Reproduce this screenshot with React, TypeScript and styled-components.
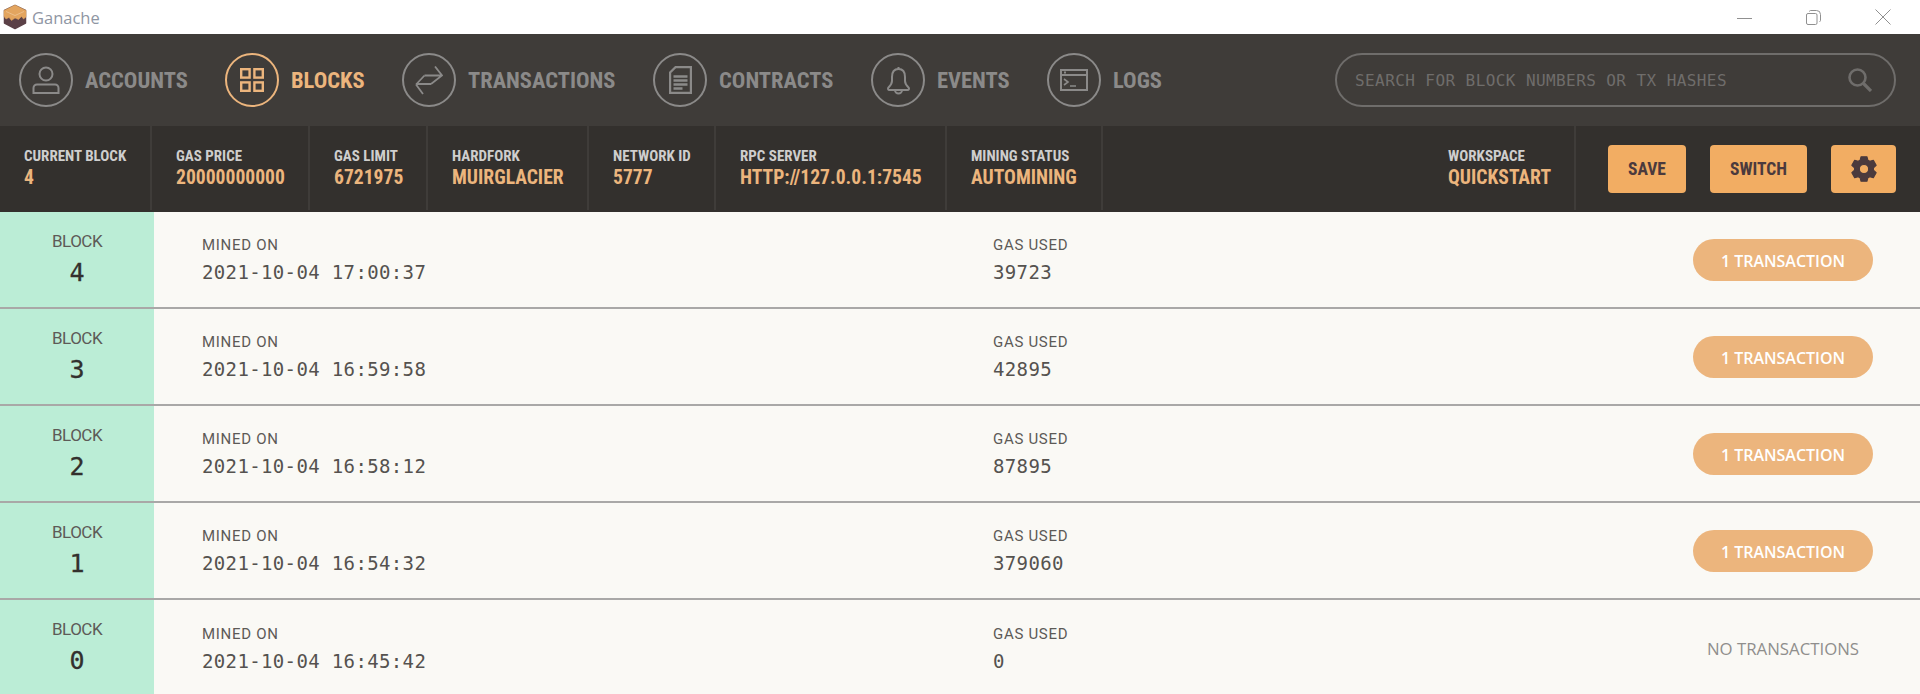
import * as React from 'react';
import styled, { createGlobalStyle } from 'styled-components';

const GlobalStyle = createGlobalStyle`
  html, body {
    margin: 0;
    padding: 0;
    height: 100%;
    overflow: hidden;
    background: #faf9f5;
  }
`;

const condensed = `"Roboto Condensed", Roboto, sans-serif`;
const mono = `"DejaVu Sans Mono", "Liberation Mono", monospace`;

const Page = styled.div`
  width: 1920px;
  height: 694px;
  overflow: hidden;
  display: flex;
  flex-direction: column;
`;

const TitleBar = styled.div`
  height: 34px;
  flex: none;
  background: #fff;
  display: flex;
  align-items: center;
  padding-left: 3px;
`;

const AppName = styled.span`
  margin-left: 5px;
  font: 400 16.5px "Open Sans", sans-serif;
  color: #8f96a3;
`;

const WindowButtons = styled.div`
  margin-left: auto;
  display: flex;
  align-items: center;
  gap: 54px;
  padding-right: 29px;
  color: #909090;
`;

const Nav = styled.div`
  height: 92px;
  flex: none;
  background: #3f3c39;
  display: flex;
  align-items: center;
  padding: 0 24px 0 19px;
`;

const NavItem = styled.div<{ $active?: boolean }>`
  display: flex;
  align-items: center;
  margin-right: 38px;
  color: ${p => (p.$active ? '#ecb57d' : '#8b8a89')};
`;

const NavCircle = styled.div`
  width: 54px;
  height: 54px;
  box-sizing: border-box;
  border: 2px solid currentColor;
  border-radius: 50%;
  display: flex;
  align-items: center;
  justify-content: center;
  margin-right: 12px;
`;

const Squeezed = styled.span<{ $w: number }>`
  display: inline-block;
  width: ${p => p.$w}px;
  white-space: nowrap;
`;

const NavLabel = styled(Squeezed)`
  font: 700 22.5px ${condensed};
  font-stretch: condensed;
`;

const Search = styled.div`
  margin-left: auto;
  width: 561px;
  height: 54px;
  box-sizing: border-box;
  border: 2px solid #6f6d6b;
  border-radius: 27px;
  display: flex;
  align-items: center;
  justify-content: space-between;
  padding: 0 22px 0 18px;
  color: #6f6d6b;
`;

const SearchText = styled.span`
  font: 400 16px ${mono};
  letter-spacing: 0.42px;
`;

const Stats = styled.div`
  height: 86px;
  flex: none;
  box-sizing: border-box;
  background: #33302d;
  display: flex;
  padding-bottom: 2px;
`;

const Stat = styled.div`
  padding: 0 24px 1px;
  border-right: 2px solid #3f3c39;
  display: flex;
  flex-direction: column;
  justify-content: center;
`;

const WorkspaceStat = styled(Stat)`
  margin-left: auto;
`;

const StatLabel = styled(Squeezed)`
  font: 700 15px ${condensed};
  font-stretch: condensed;
  color: #cfcecd;
  line-height: 20px;
`;

const StatValue = styled(Squeezed)`
  font: 700 19.6px ${condensed};
  font-stretch: condensed;
  color: #ecb57d;
  line-height: 24px;
`;

const Actions = styled.div`
  display: flex;
  align-items: center;
  gap: 24px;
  padding: 2px 24px 0 32px;
`;

const ActionButton = styled.button<{ $w: number }>`
  width: ${p => p.$w}px;
  height: 48px;
  border: 0;
  border-radius: 4px;
  padding: 0;
  background: #f2ad63;
  color: #4b3a3d;
  font: 700 17.5px ${condensed};
  font-stretch: condensed;
  display: flex;
  align-items: center;
  justify-content: center;
`;

const Row = styled.div`
  height: 97px;
  flex: none;
  box-sizing: border-box;
  display: flex;
  background: #faf9f5;
  border-bottom: 2px solid #a9a8a7;
  &:last-child {
    border-bottom: 0;
  }
`;

const BlockCell = styled.div`
  width: 154px;
  flex: none;
  background: #bbedd6;
  display: flex;
  flex-direction: column;
  align-items: center;
  padding-top: 17px;
  box-sizing: border-box;
`;

const BlockLabel = styled.div`
  font: 400 17px Roboto, sans-serif;
  letter-spacing: -0.5px;
  color: #5d5a57;
  line-height: 24px;
`;

const BlockNumber = styled.div`
  font: 400 25px ${mono};
  -webkit-text-stroke: 0.3px #33302d;
  color: #33302d;
  line-height: 36px;
  margin-top: 2px;
`;

const RowBody = styled.div`
  flex: 1;
  display: grid;
  grid-template-columns: 791px 1fr auto;
  padding: 0 47px 0 48px;
  align-items: center;
`;

const Field = styled.div`
  display: flex;
  flex-direction: column;
  padding-top: 2px;
`;

const FieldLabel = styled.div`
  font: 400 15px Roboto, sans-serif;
  letter-spacing: 0.7px;
  color: #5d5a57;
  line-height: 20px;
`;

const FieldValue = styled.div`
  font: 400 19px ${mono};
  letter-spacing: 0.36px;
  color: #55524f;
  line-height: 30px;
  margin-top: 2px;
`;

const TxPill = styled.div`
  width: 180px;
  height: 42px;
  box-sizing: border-box;
  padding-top: 2px;
  border-radius: 21px;
  background: #ecb57d;
  color: #fff;
  font: 600 16px "Open Sans", sans-serif;
  display: flex;
  align-items: center;
  justify-content: center;
`;

const NoTx = styled.div`
  width: 180px;
  text-align: center;
  color: #8f8e8c;
  font: 400 16.8px "Open Sans", sans-serif;
`;

const Logo = () => (
  <svg width="24" height="26" viewBox="0 0 24 26">
    <path d="M12 1.500 L22.500 6.500 V19 L12 24.500 L1.500 19 V6.500 Z" fill="#5b4147" stroke="#5b4147" strokeLinejoin="round" strokeWidth="1.500" />
    <path d="M12 1 L23 6.500 V13 L20.500 15 L18.500 12.500 L15.500 15.500 L12 14 L8.500 16.500 L6 13.500 L3 15 L1 12.500 V6.500 Z" fill="#e3a55f" stroke="#e3a55f" strokeLinejoin="round" strokeWidth="0.500" />
    <path d="M3 7.500 L12 11.500 L21 7.500" fill="none" stroke="#efc595" strokeWidth="0.800" />
  </svg>
);

const icons: Record<string, React.ReactNode> = {
  accounts: (
    <svg width="28" height="28" viewBox="0 0 28 28" fill="none" stroke="currentColor" strokeWidth="2">
      <circle cx="14" cy="8" r="6.500" />
      <path d="M5 18.500h18a3.500 3.500 0 0 1 3.500 3.500v5H1.500v-5A3.500 3.500 0 0 1 5 18.500z" />
    </svg>
  ),
  blocks: (
    <svg width="24" height="24" viewBox="0 0 24 24" fill="none" stroke="currentColor" strokeWidth="2.400">
      <rect x="1.200" y="1.200" width="8.400" height="8.400" />
      <rect x="14.400" y="1.200" width="8.400" height="8.400" />
      <rect x="1.200" y="14.400" width="8.400" height="8.400" />
      <rect x="14.400" y="14.400" width="8.400" height="8.400" />
    </svg>
  ),
  transactions: (
    <svg width="28" height="29" viewBox="0 0 28 29" fill="none" stroke="currentColor" strokeWidth="1.800">
      <path d="M9.500 9.500H27M20 0.500L27 9.500L16 18" />
      <path d="M16 18H1M1 18.500L8 28M1 18.500L9.500 9.500" />
    </svg>
  ),
  contracts: (
    <svg width="23" height="28" viewBox="0 0 23 28" fill="none" stroke="currentColor" strokeWidth="2.200">
      <path d="M6.500 1.100h15.400v25.800H1.100V6.500z" />
      <path d="M4.500 10.500h14M4.500 14.500h14M4.500 18.500h14M4.500 22.500h9" strokeWidth="2.400" />
    </svg>
  ),
  events: (
    <svg width="25" height="29" viewBox="0 0 25 29" fill="none" stroke="currentColor" strokeWidth="2">
      <path d="M12.500 3c4.500 0 6.500 3.500 6.500 8v4c0 3 1.500 4.500 3.500 6.500 1 1 .5 2.500-1 2.500H3.500c-1.500 0-2-1.500-1-2.500C4.500 19.500 6 18 6 15v-4c0-4.500 2-8 6.500-8z" />
      <path d="M12.500 1v2M9 24a3.500 3.500 0 0 0 7 0" />
    </svg>
  ),
  logs: (
    <svg width="28" height="22" viewBox="0 0 28 22" fill="none" stroke="currentColor" strokeWidth="2">
      <rect x="1" y="1" width="26" height="20" />
      <path d="M1 6h26M4 3.500h2" />
      <path d="M4 10l4 3-4 3M10 17h6" strokeWidth="1.600" />
    </svg>
  ),
};

const navItems = [
  { id: 'accounts', label: 'ACCOUNTS', w: 102 },
  { id: 'blocks', label: 'BLOCKS', w: 73, active: true },
  { id: 'transactions', label: 'TRANSACTIONS', w: 147 },
  { id: 'contracts', label: 'CONTRACTS', w: 114 },
  { id: 'events', label: 'EVENTS', w: 72 },
  { id: 'logs', label: 'LOGS', w: 48 },
];

const stats = [
  { label: 'CURRENT BLOCK', value: '4', w: 102 },
  { label: 'GAS PRICE', value: '20000000000', w: 108 },
  { label: 'GAS LIMIT', value: '6721975', w: 68 },
  { label: 'HARDFORK', value: 'MUIRGLACIER', w: 111 },
  { label: 'NETWORK ID', value: '5777', w: 77 },
  { label: 'RPC SERVER', value: 'HTTP://127.0.0.1:7545', w: 181 },
  { label: 'MINING STATUS', value: 'AUTOMINING', w: 106 },
];

const blocks = [
  { n: 4, mined: '2021-10-04 17:00:37', gas: '39723', tx: '1 TRANSACTION' },
  { n: 3, mined: '2021-10-04 16:59:58', gas: '42895', tx: '1 TRANSACTION' },
  { n: 2, mined: '2021-10-04 16:58:12', gas: '87895', tx: '1 TRANSACTION' },
  { n: 1, mined: '2021-10-04 16:54:32', gas: '379060', tx: '1 TRANSACTION' },
  { n: 0, mined: '2021-10-04 16:45:42', gas: '0', tx: null },
];

export default function App() {
  return (
    <Page>
      <GlobalStyle />
      <TitleBar>
        <Logo />
        <AppName>Ganache</AppName>
        <WindowButtons>
          <svg width="15" height="15" viewBox="0 0 15 15" stroke="currentColor" fill="none">
            <path d="M0 8.500h15" />
          </svg>
          <svg width="15" height="15" viewBox="0 0 15 15" stroke="currentColor" fill="none">
            <rect x="0.500" y="3.500" width="10.500" height="11" rx="1.500" />
            <path d="M3.500 1.500 a1 1 0 0 1 1-1h6a4 4 0 0 1 4 4v6a1 1 0 0 1-1 1" />
          </svg>
          <svg width="16" height="16" viewBox="0 0 16 16" stroke="currentColor" fill="none">
            <path d="M0.500 0.500l15 15M15.500 0.500l-15 15" />
          </svg>
        </WindowButtons>
      </TitleBar>

      <Nav>
        {navItems.map(item => (
          <NavItem key={item.id} $active={item.active}>
            <NavCircle>{icons[item.id]}</NavCircle>
            <NavLabel $w={item.w}>{item.label}</NavLabel>
          </NavItem>
        ))}
        <Search>
          <SearchText>SEARCH FOR BLOCK NUMBERS OR TX HASHES</SearchText>
          <svg width="24" height="24" viewBox="0 0 24 24" fill="none" stroke="currentColor">
            <circle cx="9.500" cy="9.500" r="8" strokeWidth="2.600" />
            <path d="M15.500 15.500L23 23" strokeWidth="3.200" />
          </svg>
        </Search>
      </Nav>

      <Stats>
        {stats.map(s => (
          <Stat key={s.label}>
            <StatLabel $w={s.w}>{s.label}</StatLabel>
            <StatValue $w={s.w}>{s.value}</StatValue>
          </Stat>
        ))}
        <WorkspaceStat>
          <StatLabel $w={102}>WORKSPACE</StatLabel>
          <StatValue $w={102}>QUICKSTART</StatValue>
        </WorkspaceStat>
        <Actions>
          <ActionButton $w={78}>SAVE</ActionButton>
          <ActionButton $w={97}>SWITCH</ActionButton>
          <ActionButton $w={65}>
            <svg width="28" height="28" viewBox="0 0 24 24" fill="#4b3a3d" stroke="#4b3a3d" strokeWidth="1" strokeLinejoin="round">
              <path
                fillRule="evenodd"
                d="M9.500 1.500h5l.8 2.900 1.700 1 3-.8 2.400 4.200-2.300 2.100v2.200l2.300 2.100-2.400 4.200-3-.8-1.700 1-.8 2.900h-5l-.8-2.900-1.700-1-3 .8-2.400-4.200 2.300-2.100v-2.200L1.600 8.800 4 4.600l3 .8 1.700-1zM12 8a4 4 0 1 0 0 8 4 4 0 0 0 0-8z"
              />
            </svg>
          </ActionButton>
        </Actions>
      </Stats>

      {blocks.map(b => (
        <Row key={b.n}>
          <BlockCell>
            <BlockLabel>BLOCK</BlockLabel>
            <BlockNumber>{b.n}</BlockNumber>
          </BlockCell>
          <RowBody>
            <Field>
              <FieldLabel>MINED ON</FieldLabel>
              <FieldValue>{b.mined}</FieldValue>
            </Field>
            <Field>
              <FieldLabel>GAS USED</FieldLabel>
              <FieldValue>{b.gas}</FieldValue>
            </Field>
            {b.tx ? <TxPill>{b.tx}</TxPill> : <NoTx>NO TRANSACTIONS</NoTx>}
          </RowBody>
        </Row>
      ))}
    </Page>
  );
}
